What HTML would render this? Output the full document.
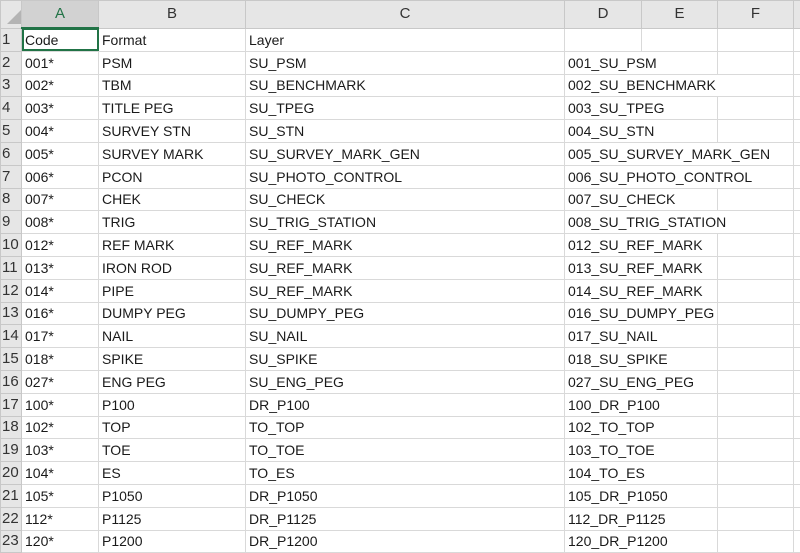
<!DOCTYPE html>
<html><head><meta charset="utf-8"><style>
html,body{margin:0;padding:0;background:#fff;width:800px;height:553px;overflow:hidden}
table{border-collapse:collapse;table-layout:fixed;width:803px;font-family:"Liberation Sans",sans-serif;font-size:14px;color:#1a1a1a}
td{border:1px solid #d9d9d9;height:21.8px;padding:0 0 0 3px;white-space:nowrap;overflow:visible;line-height:20px}
tr.h td{background:#e6e6e6;height:26px;text-align:center;font-size:15px;color:#333;border-color:#c8c8c8;padding:0}
td.r{background:#e6e6e6;color:#333;text-align:left;padding:0 0 0 1px;font-size:15px;line-height:20px;border-color:#c8c8c8}
td.sel{outline:2px solid #217346;outline-offset:-2px;position:relative}
tr.h td.selh{color:#217346;border-bottom:2px solid #217346;background:#d2d2d2}
</style></head><body>
<table>
<colgroup><col style="width:21px"><col style="width:77px"><col style="width:147px"><col style="width:319px"><col style="width:77px"><col style="width:76px"><col style="width:76px"><col style="width:10px"></colgroup>
<tr class="h"><td style="background:#e6e6e6"><svg width="14" height="14" style="position:relative;top:6px;left:3px"><polygon points="14,0 14,14 0,14" fill="#b4b4b4"/></svg></td><td class="selh">A</td><td>B</td><td>C</td><td>D</td><td>E</td><td>F</td><td></td></tr>
<tr><td class="r">1</td><td class="sel">Code</td><td>Format</td><td>Layer</td><td></td><td></td><td></td><td></td></tr>
<tr><td class="r">2</td><td>001*</td><td>PSM</td><td>SU_PSM</td><td colspan="2">001_SU_PSM</td><td></td><td></td></tr>
<tr><td class="r">3</td><td>002*</td><td>TBM</td><td>SU_BENCHMARK</td><td colspan="3">002_SU_BENCHMARK</td><td></td></tr>
<tr><td class="r">4</td><td>003*</td><td>TITLE PEG</td><td>SU_TPEG</td><td colspan="2">003_SU_TPEG</td><td></td><td></td></tr>
<tr><td class="r">5</td><td>004*</td><td>SURVEY STN</td><td>SU_STN</td><td colspan="2">004_SU_STN</td><td></td><td></td></tr>
<tr><td class="r">6</td><td>005*</td><td>SURVEY MARK</td><td>SU_SURVEY_MARK_GEN</td><td colspan="3">005_SU_SURVEY_MARK_GEN</td><td></td></tr>
<tr><td class="r">7</td><td>006*</td><td>PCON</td><td>SU_PHOTO_CONTROL</td><td colspan="3">006_SU_PHOTO_CONTROL</td><td></td></tr>
<tr><td class="r">8</td><td>007*</td><td>CHEK</td><td>SU_CHECK</td><td colspan="2">007_SU_CHECK</td><td></td><td></td></tr>
<tr><td class="r">9</td><td>008*</td><td>TRIG</td><td>SU_TRIG_STATION</td><td colspan="3">008_SU_TRIG_STATION</td><td></td></tr>
<tr><td class="r">10</td><td>012*</td><td>REF MARK</td><td>SU_REF_MARK</td><td colspan="2">012_SU_REF_MARK</td><td></td><td></td></tr>
<tr><td class="r">11</td><td>013*</td><td>IRON ROD</td><td>SU_REF_MARK</td><td colspan="2">013_SU_REF_MARK</td><td></td><td></td></tr>
<tr><td class="r">12</td><td>014*</td><td>PIPE</td><td>SU_REF_MARK</td><td colspan="2">014_SU_REF_MARK</td><td></td><td></td></tr>
<tr><td class="r">13</td><td>016*</td><td>DUMPY PEG</td><td>SU_DUMPY_PEG</td><td colspan="2">016_SU_DUMPY_PEG</td><td></td><td></td></tr>
<tr><td class="r">14</td><td>017*</td><td>NAIL</td><td>SU_NAIL</td><td colspan="2">017_SU_NAIL</td><td></td><td></td></tr>
<tr><td class="r">15</td><td>018*</td><td>SPIKE</td><td>SU_SPIKE</td><td colspan="2">018_SU_SPIKE</td><td></td><td></td></tr>
<tr><td class="r">16</td><td>027*</td><td>ENG PEG</td><td>SU_ENG_PEG</td><td colspan="2">027_SU_ENG_PEG</td><td></td><td></td></tr>
<tr><td class="r">17</td><td>100*</td><td>P100</td><td>DR_P100</td><td colspan="2">100_DR_P100</td><td></td><td></td></tr>
<tr><td class="r">18</td><td>102*</td><td>TOP</td><td>TO_TOP</td><td colspan="2">102_TO_TOP</td><td></td><td></td></tr>
<tr><td class="r">19</td><td>103*</td><td>TOE</td><td>TO_TOE</td><td colspan="2">103_TO_TOE</td><td></td><td></td></tr>
<tr><td class="r">20</td><td>104*</td><td>ES</td><td>TO_ES</td><td colspan="2">104_TO_ES</td><td></td><td></td></tr>
<tr><td class="r">21</td><td>105*</td><td>P1050</td><td>DR_P1050</td><td colspan="2">105_DR_P1050</td><td></td><td></td></tr>
<tr><td class="r">22</td><td>112*</td><td>P1125</td><td>DR_P1125</td><td colspan="2">112_DR_P1125</td><td></td><td></td></tr>
<tr><td class="r">23</td><td>120*</td><td>P1200</td><td>DR_P1200</td><td colspan="2">120_DR_P1200</td><td></td><td></td></tr>
<tr><td class="r">24</td><td></td><td></td><td></td><td></td><td></td><td></td><td></td></tr>
</table>
</body></html>
